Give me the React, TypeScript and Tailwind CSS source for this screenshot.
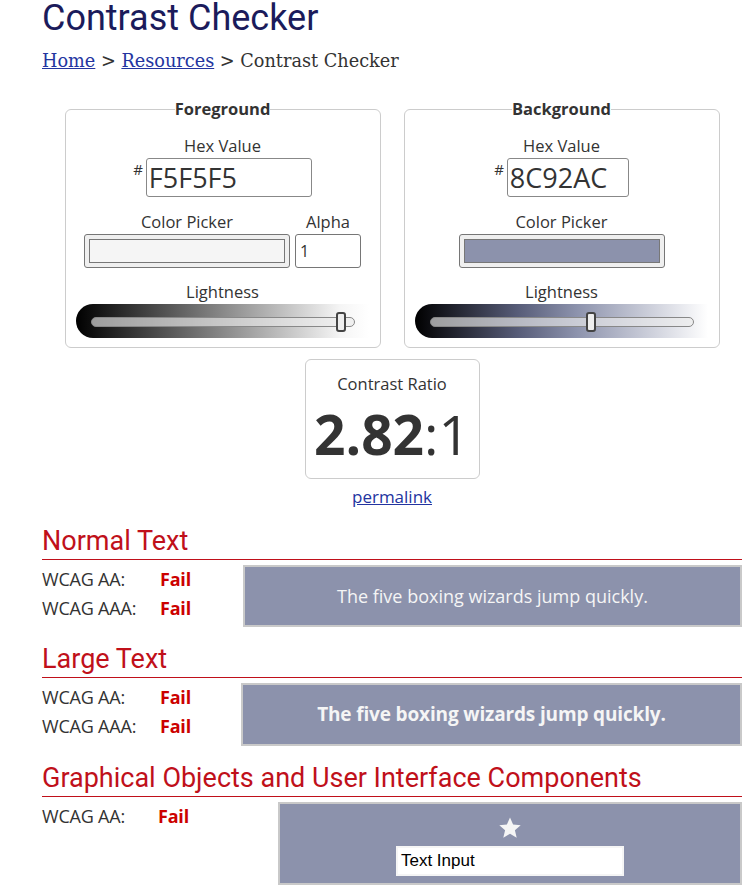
export default function App() {
  return (
    <div className="w-[746px] h-[888px] overflow-hidden bg-white font-['Open_Sans',sans-serif] text-[#333] pl-[42px] pr-[4px]">
      <h1 className="font-['Roboto',sans-serif] text-[36px] leading-[36px] text-[#1b1b5b]">Contrast Checker</h1>
      <nav className="mt-[13px] font-['DejaVu_Serif',serif] text-[17.7px] leading-[24px] text-[#333]">
        <a href="#" className="text-[#2334a0] underline">Home</a> &gt;{" "}
        <a href="#" className="text-[#2334a0] underline">Resources</a> &gt; Contrast Checker
      </nav>

      <div className="mt-[26px] flex justify-center gap-[23px]">
        <ColorBox title="Foreground" hex="F5F5F5" hexWidth="w-[166px]" swatch="bg-[#f5f5f5]" alpha gradient="bg-[linear-gradient(to_right,#000,#f5f5f5_90%,#fff)]" thumb={260} />
        <ColorBox title="Background" hex="8C92AC" hexWidth="w-[122px]" swatch="bg-[#8c92ac]" gradient="bg-[linear-gradient(to_right,#000,#575c78_35%,#8c92ac_55%,#fff)]" thumb={171} />
      </div>

      <div className="flex flex-col items-center">
        <div className="mt-[11px] w-[175px] h-[120px] rounded-[6px] border border-[#ccc] flex flex-col items-center pt-[12px]">
          <div className="text-[16.5px] leading-[24px]">Contrast Ratio</div>
          <div className="text-[55px] leading-[60px] mt-[8px]">
            <span className="font-bold">2.82</span>:1
          </div>
        </div>
        <a href="#" className="mt-[6px] text-[17px] leading-[24px] text-[#2334a0] underline">permalink</a>
      </div>

      <Section title="Normal Text" mt="mt-[16px]">
        <div className="flex">
          <Results aaa />
          <div className="ml-[52px] flex-1 h-[62px] bg-[#8c92ac] border-2 border-[#c9c9c9] flex items-center justify-center text-[#f5f5f5] text-[18px]">
            The five boxing wizards jump quickly.
          </div>
        </div>
      </Section>

      <Section title="Large Text" mt="mt-[16px]">
        <div className="flex">
          <Results aaa />
          <div className="ml-[50px] flex-1 h-[63px] bg-[#8c92ac] border-2 border-[#c9c9c9] flex items-center justify-center text-[#f5f5f5] text-[19px] font-bold tracking-[-0.15px]">
            The five boxing wizards jump quickly.
          </div>
        </div>
      </Section>

      <Section title="Graphical Objects and User Interface Components" mt="mt-[16px]">
        <div className="flex">
          <Results failX="w-[116px]" />
          <div className="ml-[89px] flex-1 h-[83px] bg-[#8c92ac] border-2 border-[#c9c9c9] flex flex-col items-center pt-[12px]">
            <svg width="24" height="24" viewBox="0 0 24 24">
              <path d="M12 1.5l3.1 7.1 7.6.6-5.8 5 1.8 7.5L12 17.7l-6.7 4 1.8-7.5-5.8-5 7.6-.6z" fill="#f5f5f5" />
            </svg>
            <div className="mt-[6px] w-[228px] h-[30px] bg-white border-2 border-[#f5f5f5] font-['Liberation_Sans',sans-serif] text-[17px] leading-[26px] text-black px-[3px]">
              Text Input
            </div>
          </div>
        </div>
      </Section>
    </div>
  );
}

function ColorBox(props: {
  title: string;
  hex: string;
  hexWidth: string;
  swatch: string;
  gradient: string;
  alpha?: boolean;
  thumb: number;
}) {
  return (
    <fieldset className="w-[316px] h-[249px] border border-[#ccc] rounded-[6px] px-[10px] flex flex-col items-center">
      <legend className="mx-auto px-0 font-bold text-[16.5px] leading-[20px]">{props.title}</legend>
      <div className="mt-[15px] text-[16.5px] leading-[24px]">Hex Value</div>
      <div className="flex items-start">
        <span className="text-[15px] leading-[16px] mt-[3px] mr-[3px]">#</span>
        <div className={`${props.hexWidth} h-[39px] border border-[#888] rounded-[3px] text-[27px] leading-[37px] px-[2px]`}>
          {props.hex}
        </div>
      </div>
      <div className="mt-[13px] flex gap-[5px]">
        <div className="flex flex-col items-center">
          <div className="text-[16.5px] leading-[24px]">Color Picker</div>
          <div className="w-[206px] h-[34px] bg-[#efefef] border border-[#767676] rounded-[3px] p-[4px]">
            <div className={`w-full h-full ${props.swatch} border border-[#777]`} />
          </div>
        </div>
        {props.alpha && (
          <div className="flex flex-col items-center">
            <div className="text-[16.5px] leading-[24px]">Alpha</div>
            <div className="w-[66px] h-[34px] border border-[#767676] rounded-[3px] text-[16px] leading-[32px] px-[4px] self-stretch">1</div>
          </div>
        )}
      </div>
      <div className="mt-[12px] text-[16.5px] leading-[24px]">Lightness</div>
      <div className={`relative w-[293px] h-[34px] rounded-l-full rounded-r-[20px] ${props.gradient}`}>
        <div className="absolute left-[15px] right-[14px] top-[13px] h-[10px] rounded-full border border-[#888] bg-[rgba(235,235,235,0.65)]" />
        <div
          className="absolute top-[8px] w-[10px] h-[20px] rounded-[3px] border-2 border-[#444] bg-[#eee]"
          style={{ left: props.thumb }}
        />
      </div>
    </fieldset>
  );
}

function Section(props: { title: string; mt: string; children: React.ReactNode }) {
  return (
    <section className={props.mt}>
      <h2 className="font-['Roboto',sans-serif] text-[27px] leading-[32px] text-[#c0101a] pb-[2px]">
        {props.title}
      </h2>
      <div className="h-[1px] bg-[#c0101a] mb-[5px]" />
      {props.children}
    </section>
  );
}

function Results(props: { aaa?: boolean; failX?: string }) {
  const labelW = props.failX ?? "w-[118px]";
  return (
    <div className="flex flex-col text-[18px] leading-[29px] tracking-[-0.2px]">
      <div className="flex">
        <span className={labelW}>WCAG AA:</span>
        <span className="font-bold text-[#cc0000]">Fail</span>
      </div>
      {props.aaa && (
        <div className="flex">
          <span className={labelW}>WCAG AAA:</span>
          <span className="font-bold text-[#cc0000]">Fail</span>
        </div>
      )}
    </div>
  );
}
